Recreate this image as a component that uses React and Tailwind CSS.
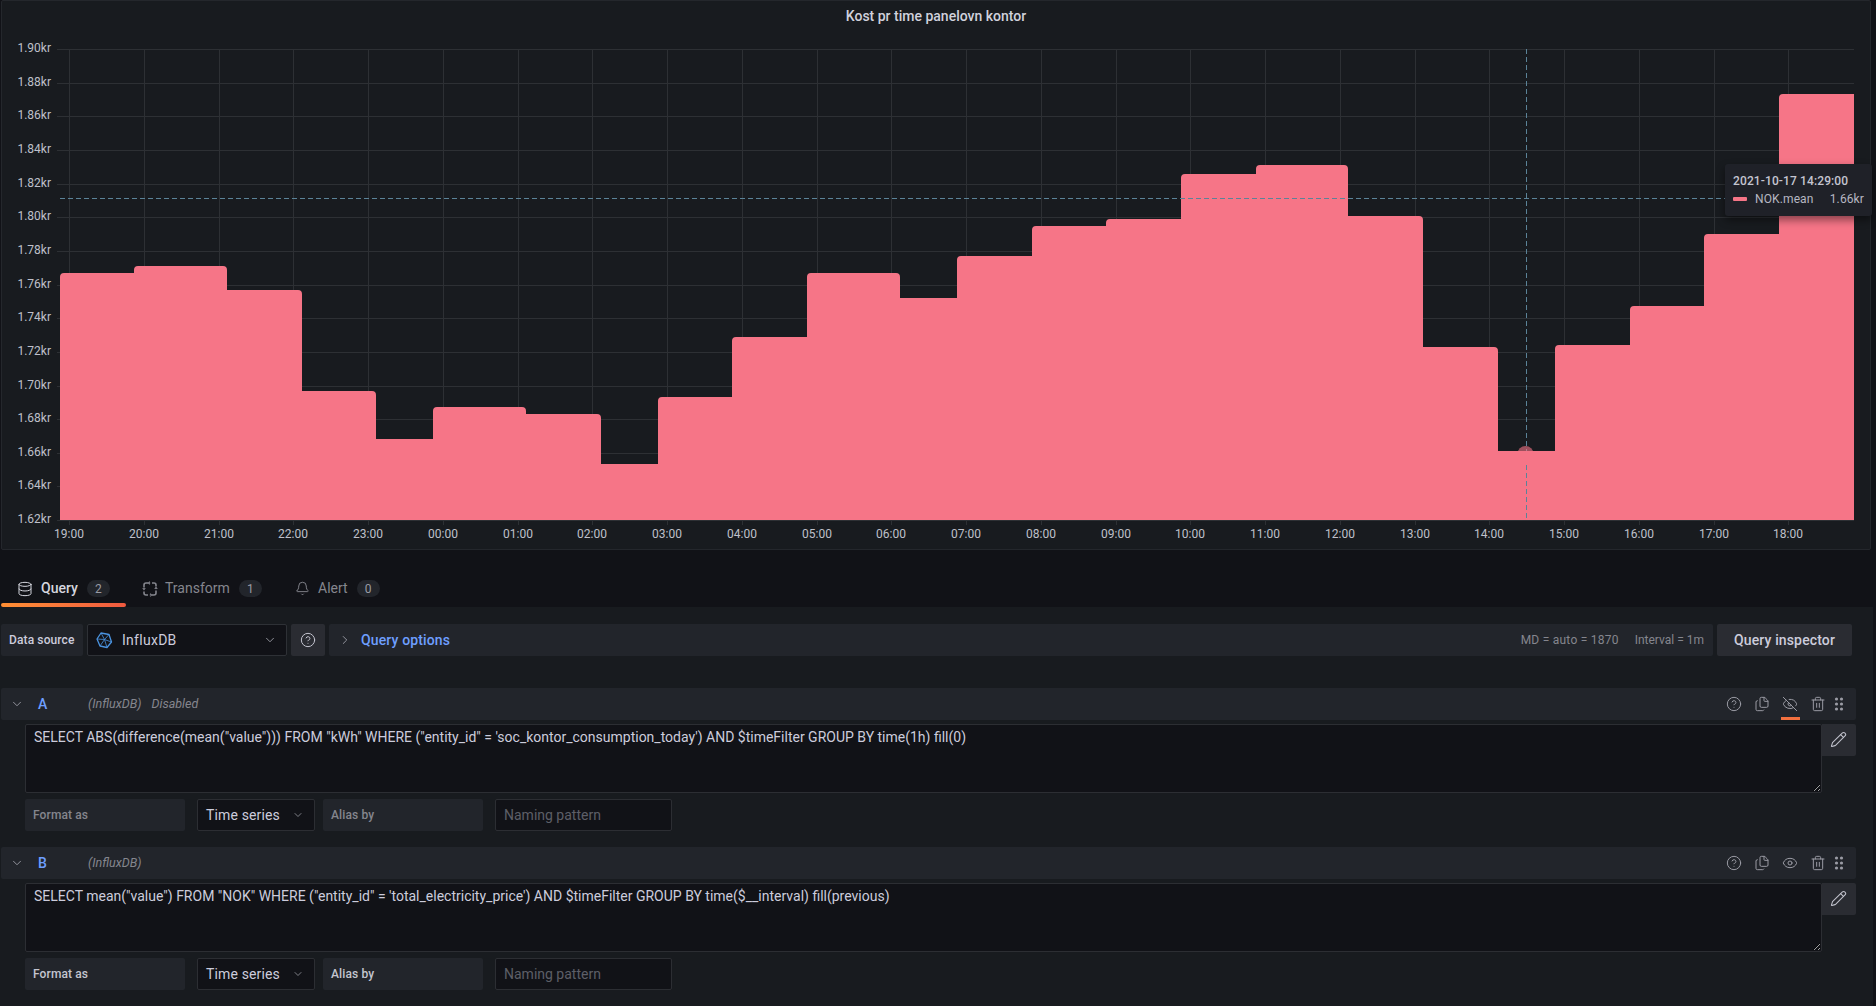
import React from 'react';
import { Database, Bell, CircleHelp, Files, Eye, EyeOff, Trash2, Pencil, ChevronDown, ChevronRight } from 'lucide-react';

const PINK = '#f67587';

// [right edge of the step, top of the step] in page pixels
const steps = [
  [134, 273], [227, 266], [302, 290], [376, 391], [433, 439], [526, 407], [601, 414], [658, 464],
  [732, 397], [807, 337], [900, 273], [957, 298], [1032, 256], [1106, 226], [1181, 219], [1256, 174],
  [1348, 165], [1423, 216], [1498, 347], [1555, 451], [1630, 345], [1704, 306], [1779, 234], [1854, 94],
];

const buildArea = () => {
  const r = 4;
  let d = `M60 520 L60 ${steps[0][1] + r} Q60 ${steps[0][1]} ${60 + r} ${steps[0][1]}`;
  steps.forEach(([x, top], i) => {
    const next = steps[i + 1];
    if (!next) {
      d += ` L${x} ${top} L${x} 520 Z`;
    } else if (next[1] < top) {
      d += ` L${x} ${top} L${x} ${next[1] + r} Q${x} ${next[1]} ${x + r} ${next[1]}`;
    } else {
      d += ` L${x - r} ${top} Q${x} ${top} ${x} ${top + r} L${x} ${next[1]}`;
    }
  });
  return d;
};

const yLabels = ['1.90', '1.88', '1.86', '1.84', '1.82', '1.80', '1.78', '1.76', '1.74', '1.72', '1.70', '1.68', '1.66', '1.64', '1.62'];
const xLabels = ['19:00', '20:00', '21:00', '22:00', '23:00', '00:00', '01:00', '02:00', '03:00', '04:00', '05:00', '06:00', '07:00', '08:00', '09:00', '10:00', '11:00', '12:00', '13:00', '14:00', '15:00', '16:00', '17:00', '18:00'];
const gridY = (i) => Math.floor(49.6 + 33.64 * i) + 0.5;
const gridX = (i) => Math.floor(69.72 + 74.74 * i) + 0.5;

const Chart = () => (
  <svg viewBox="2 1 1868 548" className="block h-[548px] w-[1868px]">
    <text x="936" y="21" textAnchor="middle" fontSize="14" fontWeight="500" fill="#d0d1dc">Kost pr time panelovn kontor</text>
    {yLabels.map((label, i) => (
      <g key={label}>
        <line x1="57" x2="1854" y1={gridY(i)} y2={gridY(i)} stroke="#2d3034" />
        <text x="51" y={gridY(i) + 2.5} textAnchor="end" fontSize="12" fill="#bfc0ca">{label}kr</text>
      </g>
    ))}
    {xLabels.map((label, i) => (
      <g key={label}>
        <line x1={gridX(i)} x2={gridX(i)} y1="49" y2="525" stroke="#2d3034" />
        <text x={gridX(i) - 0.5} y="538" textAnchor="middle" fontSize="12" fill="#bfc0ca">{label}</text>
      </g>
    ))}
    <path d={buildArea()} fill={PINK} />
    <line x1="60" x2="1854" y1="198.5" y2="198.5" stroke="#5b8398" strokeDasharray="5 3" />
    <line x1="1526.5" x2="1526.5" y1="49" y2="520" stroke="#5b8398" strokeDasharray="5 3" />
    <circle cx="1525.5" cy="454" r="8" fill={PINK} fillOpacity="0.6" />
    <path d="M1517 462 h17 v-11 h-17 z" fill={PINK} />
  </svg>
);

const Tooltip = () => (
  <div className="absolute left-[1723px] top-[163px] h-[52px] w-[147px] rounded-[3px] bg-[#1f2128] px-2 pt-2 text-[12px] leading-[18px] tracking-[0.01em] text-[#c4c5d0] shadow-[0_4px_8px_rgba(0,0,0,0.45)]">
    <div className="font-medium">2021-10-17 14:29:00</div>
    <div className="flex items-center">
      <span className="h-[4px] w-[14px] rounded-[1px] bg-[#f67587]" />
      <span className="ml-2 text-[#b6b7c2]">NOK.mean</span>
      <span className="ml-auto text-[#b6b7c2]">1.66kr</span>
    </div>
  </div>
);

const TransformIcon = () => (
  <svg width="16" height="16" viewBox="0 0 16 16" fill="none" stroke="currentColor" strokeWidth="1.6">
    <path d="M2 6.5V4a2 2 0 0 1 2-2h2M10 2h2a2 2 0 0 1 2 2v1.5M14 9.5V12a2 2 0 0 1-2 2h-2M6 14H4a2 2 0 0 1-2-2v-1.5" />
    <path d="M0.8 7l1.2 1.6L3.2 7M12.8 8l1.2-1.6L15.2 8M8 .8l-1.6 1.2L8 3.2M8 12.8l1.6 1.2L8 15.2" strokeWidth="1.2" />
  </svg>
);

const InfluxIcon = () => (
  <svg width="18" height="18" viewBox="0 0 18 18" fill="none" stroke="#4a93e0" strokeWidth="1.3" strokeLinejoin="round">
    <path d="M6 2l8 1.5 2.5 7.5-4.5 5.5-7-1.5L2 8z" />
    <path d="M6 2l3.5 6.5L14 3.5M2 8l7.5.5 7 2.5M9.5 8.5L12 16.5M9.5 8.5L5 15" strokeWidth="0.8" />
  </svg>
);

const DragIcon = () => (
  <svg width="14" height="16" viewBox="0 0 14 16" fill="#9a9ba4">
    {[3, 8, 13].map((y) => (
      <g key={y}>
        <circle cx="4.5" cy={y} r="1.6" />
        <circle cx="9.5" cy={y} r="1.6" />
      </g>
    ))}
  </svg>
);

const Tab = ({ icon, label, count, active, className, labelClass }) => (
  <div className={`relative flex h-[37px] items-center pl-4 ${className}`}>
    <span className={active ? 'text-[#d5d6df]' : 'text-[#85868e]'}>{icon}</span>
    <span className={`text-[14px] ${labelClass} ${active ? 'font-medium text-[#d5d6df]' : 'text-[#85868e]'}`}>{label}</span>
    <span className="ml-[9px] flex h-[17px] w-[23px] items-center justify-center rounded-full bg-[#22252b] text-[12px] text-[#9a9ba4]">{count}</span>
    {active && <span className="absolute bottom-0 left-0 h-[4px] w-full rounded-[2px] bg-gradient-to-r from-[#ff8f33] to-[#f0593f]" />}
  </div>
);

const IconBtn = ({ children, underline }) => (
  <span className="relative flex h-8 w-7 items-center justify-center text-[#9a9ba4]">
    {children}
    {underline && <span className="absolute bottom-0 left-[5px] h-[3px] w-[19px] bg-[#f2703f]" />}
  </span>
);

const FormatLabel = ({ children, width, dim }) => (
  <div className={`flex h-8 items-center rounded-[2px] bg-[#22252b] px-2 text-[12px] font-medium tracking-[0.01em] ${width} ${dim ? 'text-[#85868e]' : 'text-[#c4c5d0]'}`}>
    {children}
  </div>
);

const QueryRow = ({ letter, sql, disabled }) => (
  <div className="w-[1855px]">
    <div className="flex h-8 items-center rounded-[2px] bg-[#22252b]">
      <ChevronDown size={14} strokeWidth={1.5} className="ml-[9px] text-[#a0a1aa]" />
      <span className="ml-[14px] w-[50px] text-[14px] font-medium text-[#6e9fff]">{letter}</span>
      <span className="text-[12.5px] italic text-[#85868e]">(InfluxDB)</span>
      {disabled && <span className="ml-[10px] text-[12.5px] italic text-[#85868e]">Disabled</span>}
      <div className="ml-auto mr-[10px] flex items-center">
        <IconBtn><CircleHelp size={16} strokeWidth={1.5} /></IconBtn>
        <IconBtn><Files size={16} strokeWidth={1.5} /></IconBtn>
        <IconBtn underline={disabled}>{disabled ? <EyeOff size={16} strokeWidth={1.5} /> : <Eye size={16} strokeWidth={1.5} />}</IconBtn>
        <IconBtn><Trash2 size={16} strokeWidth={1.5} /></IconBtn>
        <span className="flex h-8 w-[14px] items-center justify-center"><DragIcon /></span>
      </div>
    </div>
    <div className="mt-1 flex pl-6">
      <textarea
        readOnly
        defaultValue={sql}
        className="block h-[69px] w-[1797px] resize-y rounded-[2px] border border-[#2c2e33] bg-[#111217] px-2 pt-[2px] text-[14px] leading-[20px] text-[#ccccdc] outline-none"
      />
      <span className="flex h-8 w-[34px] items-center justify-center rounded-r-[2px] bg-[#2a2c32] pb-[2px] pr-[2px] text-[#c0c1cb]">
        <Pencil size={17} strokeWidth={1.5} />
      </span>
    </div>
    <div className="mt-[6px] flex pl-6">
      <FormatLabel width="w-[160px]" dim={disabled}>Format as</FormatLabel>
      <div className="ml-3 flex h-8 w-[118px] items-center justify-between rounded-[2px] border border-[#2c2e33] bg-[#111217] pl-2 pr-[10px] text-[14px] tracking-[0.01em] text-[#ccccdc]">
        Time series
        <ChevronDown size={12} strokeWidth={1.5} className="text-[#a0a1aa]" />
      </div>
      <div className="ml-2"><FormatLabel width="w-[160px]" dim={disabled}>Alias by</FormatLabel></div>
      <input
        readOnly
        placeholder="Naming pattern"
        className="ml-3 h-8 w-[177px] rounded-[2px] border border-[#2c2e33] bg-[#111217] px-2 text-[14px] outline-none placeholder:text-[#5d5f67]"
      />
    </div>
  </div>
);

export default function App() {
  return (
    <div className="h-[1006px] w-[1876px] overflow-hidden bg-[#111217] font-['Roboto',sans-serif]">
      <div className="relative ml-px h-[550px] w-[1870px] rounded-[2px] border border-[#24272c] bg-[#181b1f]">
        <Chart />
        <Tooltip />
      </div>

      <div className="flex h-[57px] items-end">
        <Tab active className="ml-px w-[125px]" labelClass="ml-2" icon={<Database size={16} strokeWidth={1.5} />} label="Query" count="2" />
        <Tab icon={<TransformIcon />} label="Transform" count="1" className="w-[153px]" labelClass="ml-[7px]" />
        <Tab icon={<Bell size={15} strokeWidth={1.5} />} label="Alert" count="0" labelClass="ml-[8px]" />
      </div>

      <div className="h-[399px] w-[1873px] bg-[#181b1f] pl-px pt-[17px]">
        <div className="flex h-8 w-[1851px] gap-1">
          <div className="flex w-[82px] items-center rounded-[2px] bg-[#22252b] pl-2 text-[12px] font-medium tracking-[0.01em] text-[#ccccdc]">Data source</div>
          <div className="flex w-[200px] items-center rounded-[2px] border border-[#2e3136] bg-[#111217] pl-[7px] pr-[9px] text-[14px] tracking-[0.02em] text-[#ccccdc]">
            <InfluxIcon />
            <span className="ml-[9px]">InfluxDB</span>
            <ChevronDown size={14} strokeWidth={1.5} className="ml-auto text-[#a0a1aa]" />
          </div>
          <div className="flex w-[34px] items-center justify-center rounded-[2px] bg-[#2a2c32] text-[#c4c5d0]">
            <CircleHelp size={16} strokeWidth={1.5} />
          </div>
          <div className="flex flex-1 items-center rounded-[2px] bg-[#22252b] pl-[9px] pr-[9px]">
            <ChevronRight size={14} strokeWidth={1.5} className="text-[#a0a1aa]" />
            <span className="ml-[9px] text-[14px] font-medium tracking-[0.01em] text-[#6e9fff]">Query options</span>
            <span className="ml-auto text-[12px] tracking-[0.02em] text-[#85868e]">MD = auto = 1870</span>
            <span className="ml-4 text-[12px] text-[#85868e]">Interval = 1m</span>
          </div>
          <div className="flex w-[135px] items-center justify-center rounded-[2px] bg-[#2a2c32] text-[14px] font-medium tracking-[0.01em] text-[#ccccdc]">Query inspector</div>
        </div>

        <div className="mt-8 flex flex-col gap-4">
          <QueryRow
            letter="A"
            disabled
            sql={`SELECT ABS(difference(mean("value"))) FROM "kWh" WHERE ("entity_id" = 'soc_kontor_consumption_today') AND $timeFilter GROUP BY time(1h) fill(0)`}
          />
          <QueryRow
            letter="B"
            sql={`SELECT mean("value") FROM "NOK" WHERE ("entity_id" = 'total_electricity_price') AND $timeFilter GROUP BY time($__interval) fill(previous)`}
          />
        </div>
      </div>
    </div>
  );
}
